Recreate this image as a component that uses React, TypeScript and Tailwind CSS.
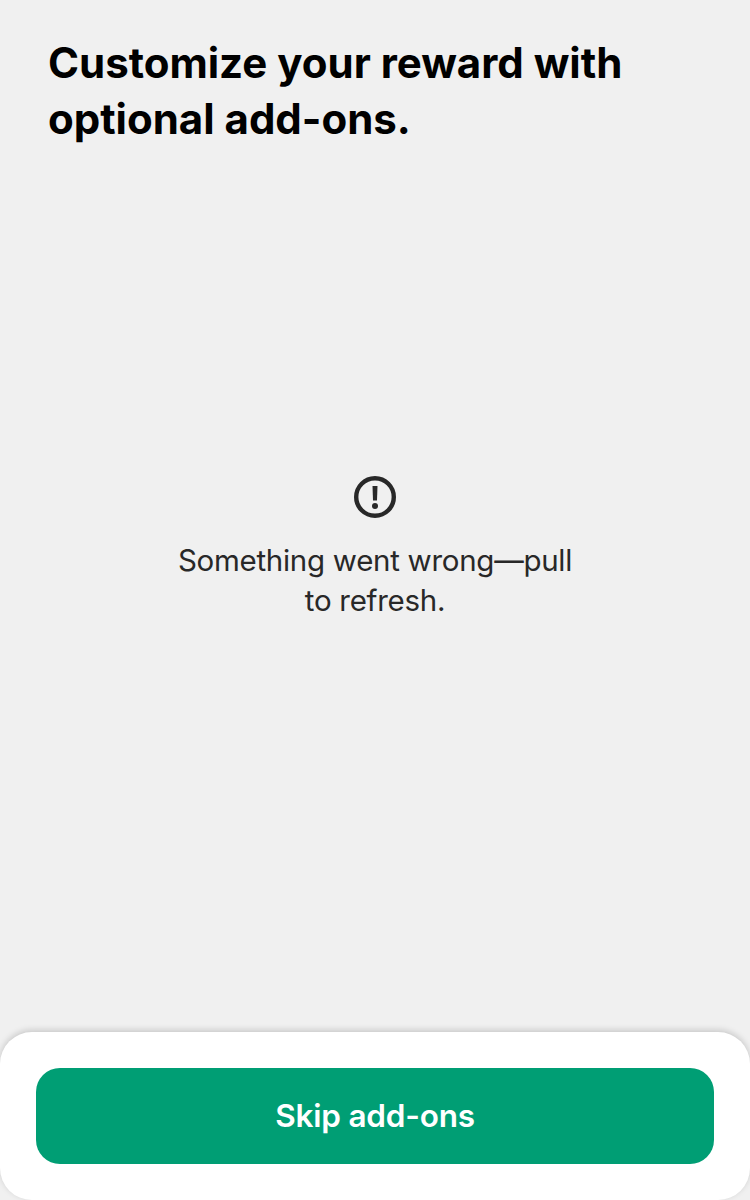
export default function App() {
  return (
    <main className="flex h-[1200px] w-[750px] flex-col overflow-hidden bg-[#f0f0f0] font-['Inter',sans-serif]">
      <h1 className="px-12 pt-[35px] text-[42px] leading-14 font-bold tracking-[-0.01px] text-black">
        Customize your reward with
        <br />
        optional add-ons.
      </h1>
      <section className="flex flex-1 flex-col items-center pt-[329px] text-[#282828]">
        <svg className="size-[42px]" viewBox="0 0 42 42" fill="none">
          <circle cx="21" cy="21" r="18.8" stroke="currentColor" strokeWidth="4.4" />
          <path d="M18.5 10h5l-.5 14.6h-4z" fill="currentColor" />
          <circle cx="21" cy="30" r="3" fill="currentColor" />
        </svg>
        <p className="mt-[22px] text-center text-[29.5px] leading-10 tracking-[-0.28px]">
          Something went wrong—pull
          <br />
          to refresh.
        </p>
      </section>
      <footer className="h-[168px] rounded-[32px] bg-white p-9 shadow-[0_-2px_6px_rgba(0,0,0,0.17)]">
        <button className="h-24 w-full rounded-3xl bg-[#009e74] text-[31.5px] font-semibold tracking-[-0.2px] text-white">
          Skip add-ons
        </button>
      </footer>
    </main>
  );
}
